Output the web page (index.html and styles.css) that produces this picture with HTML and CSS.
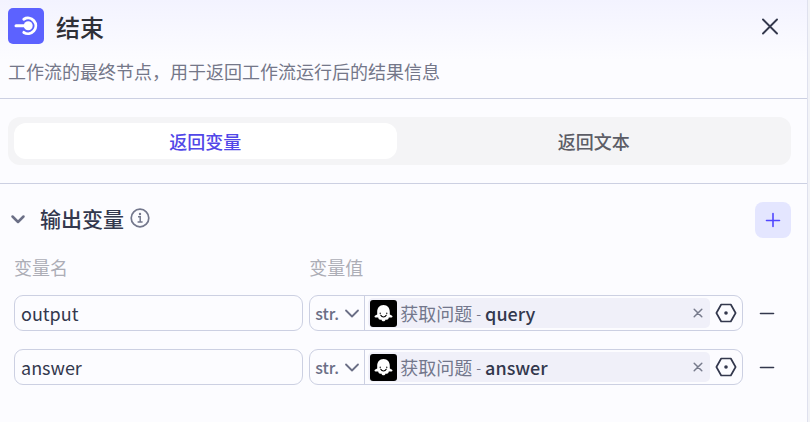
FILE: index.html
```html
<!DOCTYPE html>
<html lang="zh-CN">
<head>
    <meta charset="UTF-8">
    <meta name="viewport" content="width=device-width, initial-scale=1.0">
    <title>结束</title>
    <link rel="stylesheet" href="styles.css">
</head>
<body>

<!-- Iconos compartidos -->
<svg class="sprite" aria-hidden="true">
    <symbol id="icon-chevron" viewBox="0 0 16 16">
        <path d="M2 5.500l6 6 6-6" fill="none" stroke="currentColor" stroke-width="1.800" stroke-linecap="round" stroke-linejoin="round"/>
    </symbol>
    <symbol id="icon-avatar" viewBox="0 0 27 27">
        <rect width="27" height="27" rx="3" fill="#000"/>
        <path d="M13.5 5C9.400 5 7.200 8 7.200 12v2.500c-1.300.7-2.900 1.300-2.700 2.200.3.900 2.500.8 3.700.8.300 1.800 1.500 2.700 3 2 .6 1.300 1.500 1.800 2.300 1.800s1.700-.5 2.300-1.800c1.500.7 2.700-.2 3-2 1.200 0 3.400.1 3.700-.8.200-.9-1.400-1.500-2.700-2.200V12c0-4-2.200-7-6.300-7z" fill="#fff"/>
        <path d="M10.800 15.200c1.200 2.400 4.200 2.400 5.400 0M10.200 13v.6M16.800 13v.6" fill="none" stroke="#000" stroke-width="1.100" stroke-linecap="round"/>
    </symbol>
    <symbol id="icon-clear" viewBox="0 0 10 10">
        <path d="M1.200 1.200l7.600 7.600M8.800 1.200L1.200 8.800" fill="none" stroke="currentColor" stroke-width="1.500" stroke-linecap="round"/>
    </symbol>
    <symbol id="icon-hexagon" viewBox="0 0 22 20">
        <path d="M6.200 1.500h9.600L20.600 10l-4.800 8.500H6.200L1.400 10z" fill="none" stroke="currentColor" stroke-width="1.700" stroke-linejoin="round"/>
        <circle cx="11" cy="10" r="1.800" fill="currentColor"/>
    </symbol>
    <symbol id="icon-minus" viewBox="0 0 16 16">
        <path d="M1.500 8.500h13" stroke="currentColor" stroke-width="1.600" stroke-linecap="round"/>
    </symbol>
</svg>

<main class="panel">
    <header class="header">
        <div class="title-row">
            <svg class="logo" viewBox="0 0 36 36" aria-hidden="true">
                <rect width="36" height="36" rx="5" fill="#5c62ff"/>
                <path d="M8 17.800H20" stroke="#fff" stroke-width="3" stroke-linecap="round"/>
                <circle cx="20.200" cy="17.800" r="4.500" fill="#fff"/>
                <path d="M15.800 11.200A7.800 7.800 0 1 1 15.800 24.400" fill="none" stroke="#fff" stroke-width="2.900" stroke-linecap="round"/>
            </svg>
            <h1>结束</h1>
            <button class="icon-button close" type="button" aria-label="关闭">
                <svg width="18" height="18" viewBox="0 0 18 18"><path d="M2 2.500l14 14M16 2.500l-14 14" stroke="currentColor" stroke-width="1.900" stroke-linecap="round"/></svg>
            </button>
        </div>
        <p class="description">工作流的最终节点，用于返回工作流运行后的结果信息</p>
    </header>

    <section class="mode">
        <div class="tabs" role="tablist">
            <button class="tab active" type="button" role="tab" aria-selected="true">返回变量</button>
            <button class="tab" type="button" role="tab" aria-selected="false">返回文本</button>
        </div>
    </section>

    <section class="outputs">
        <div class="section-head">
            <button class="icon-button toggle" type="button" aria-label="收起">
                <svg width="16" height="16" viewBox="0 0 16 16"><path d="M2.500 5.500L8 11l5.500-5.500" fill="none" stroke="currentColor" stroke-width="2.500" stroke-linecap="round" stroke-linejoin="round"/></svg>
            </button>
            <h2>输出变量</h2>
            <svg class="info" viewBox="0 0 20 20" aria-hidden="true">
                <circle cx="10" cy="10" r="8.800" fill="none" stroke="currentColor" stroke-width="1.700"/>
                <circle cx="10" cy="6" r="1.200" fill="currentColor"/>
                <path d="M8 8.800h2.200v5M7.600 14h5" fill="none" stroke="currentColor" stroke-width="1.500"/>
            </svg>
            <button class="add" type="button" aria-label="添加">
                <svg width="16" height="16" viewBox="0 0 16 16"><path d="M8 1.500v13M1.500 8.500h13" stroke="currentColor" stroke-width="1.600" stroke-linecap="round"/></svg>
            </button>
        </div>

        <div class="row labels">
            <span id="label-name">变量名</span>
            <span id="label-value">变量值</span>
        </div>

        <div class="row">
            <input class="name" type="text" value="output" aria-labelledby="label-name">
            <div class="value">
                <div class="type">
                    <select aria-label="类型"><option>str.</option></select>
                    <svg class="type-arrow" aria-hidden="true"><use href="#icon-chevron"/></svg>
                </div>
                <div class="token">
                    <svg class="avatar" aria-hidden="true"><use href="#icon-avatar"/></svg>
                    <span class="source">获取问题</span>
                    <span class="dash">-</span>
                    <span class="field">query</span>
                    <button class="icon-button clear" type="button" aria-label="清除"><svg width="10" height="10"><use href="#icon-clear"/></svg></button>
                </div>
                <button class="icon-button picker" type="button" aria-label="选择变量"><svg width="22" height="20"><use href="#icon-hexagon"/></svg></button>
            </div>
            <button class="icon-button remove" type="button" aria-label="删除"><svg width="16" height="16"><use href="#icon-minus"/></svg></button>
        </div>

        <div class="row">
            <input class="name" type="text" value="answer" aria-labelledby="label-name">
            <div class="value">
                <div class="type">
                    <select aria-label="类型"><option>str.</option></select>
                    <svg class="type-arrow" aria-hidden="true"><use href="#icon-chevron"/></svg>
                </div>
                <div class="token">
                    <svg class="avatar" aria-hidden="true"><use href="#icon-avatar"/></svg>
                    <span class="source">获取问题</span>
                    <span class="dash">-</span>
                    <span class="field">answer</span>
                    <button class="icon-button clear" type="button" aria-label="清除"><svg width="10" height="10"><use href="#icon-clear"/></svg></button>
                </div>
                <button class="icon-button picker" type="button" aria-label="选择变量"><svg width="22" height="20"><use href="#icon-hexagon"/></svg></button>
            </div>
            <button class="icon-button remove" type="button" aria-label="删除"><svg width="16" height="16"><use href="#icon-minus"/></svg></button>
        </div>
    </section>
</main>

</body>
</html>
```
FILE: styles.css
```css
* {
    box-sizing: border-box;
}
body {
    margin: 0;
    padding-right: 2px;
    background-color: #f2f3f7;
    color: #33384d;
    font-family: "Noto Sans CJK SC", sans-serif;
    font-size: 18px;
}
button, input, select {
    font-family: inherit;
    font-size: inherit;
    color: inherit;
    margin: 0;
}
button {
    padding: 0;
    border: none;
    background: none;
    cursor: pointer;
}
h1, h2, p {
    margin: 0;
    font-weight: 500;
}
svg {
    display: block;
    flex-shrink: 0;
}
.sprite {
    position: absolute;
    width: 0;
    height: 0;
}
.panel {
    min-height: 100vh;
    border-right: 1px solid #dfe1ee;
    background: linear-gradient(#f3f3ff, #fcfcff 60px);
}
.icon-button {
    display: flex;
    align-items: center;
    justify-content: center;
    flex-shrink: 0;
}

/* Cabecera */
.header {
    padding: 8px 16px 12px 8px;
    border-bottom: 1px solid #ccd0e2;
}
.title-row {
    display: flex;
    align-items: center;
    gap: 12px;
}
.logo {
    width: 36px;
    height: 36px;
}
h1 {
    padding-top: 2px;
    font-size: 24px;
    line-height: 34px;
    color: #2f3037;
}
.close {
    width: 42px;
    height: 36px;
    margin-left: auto;
}
.description {
    padding-top: 14px;
    padding-bottom: 2px;
    font-weight: 400;
    line-height: 26px;
    color: #747789;
}

/* Pestañas */
.mode {
    padding: 18px 16px 18px 8px;
    border-bottom: 1px solid #ccd0e2;
}
.tabs {
    display: flex;
    gap: 6px;
    padding: 6px;
    border-radius: 12px;
    background-color: #f4f4f6;
}
.tab {
    flex: 1;
    height: 36px;
    border-radius: 12px;
    font-weight: 500;
    color: #5c5d66;
}
.tab.active {
    background-color: #fff;
    color: #5147e8;
}

/* Variables */
.outputs {
    padding: 18px 16px 36px 8px;
}
.section-head {
    display: flex;
    align-items: flex-start;
    height: 36px;
}
.toggle {
    width: 20px;
    height: 34px;
    color: #6b6f86;
}
h2 {
    margin-left: 12px;
    font-size: 21px;
    line-height: 32px;
}
.info {
    width: 20px;
    height: 32px;
    margin-left: 6px;
    color: #73778c;
}
.add {
    display: flex;
    align-items: center;
    justify-content: center;
    width: 36px;
    height: 36px;
    margin-left: auto;
    border-radius: 8px;
    background-color: #e4e6ff;
    color: #5147ff;
}
.row {
    display: grid;
    grid-template-columns: 2fr 3fr 36px;
    gap: 6px;
    margin-bottom: 18px;
    padding: 0 6px;
}
.labels {
    margin: 18px 0 16px;
    line-height: 23px;
    color: #acadb6;
}
.name {
    min-width: 0;
    height: 36px;
    padding: 0 6px;
    border: 1px solid #ccd0e2;
    border-radius: 9px;
    background: none;
}
.value {
    display: flex;
    align-items: center;
    min-width: 0;
    height: 36px;
    border: 1px solid #ccd0e2;
    border-radius: 9px;
}
.type {
    display: grid;
    align-items: center;
    width: 55px;
    height: 100%;
    border-right: 1px solid #ccd0e2;
    color: #6b6f86;
}
.type select {
    grid-area: 1 / 1;
    width: 100%;
    height: 100%;
    padding: 0 0 0 5px;
    border: none;
    background: none;
    font-size: 16px;
    font-weight: 500;
    appearance: none;
}
.type-arrow {
    grid-area: 1 / 1;
    justify-self: end;
    width: 16px;
    height: 16px;
    margin-right: 4px;
    pointer-events: none;
}
.token {
    display: flex;
    align-items: center;
    flex: 1;
    min-width: 0;
    height: 30px;
    margin-left: 3px;
    padding: 0 2px;
    border-radius: 5px;
    background-color: #f0f0f9;
}
.avatar {
    width: 27px;
    height: 27px;
}
.source {
    margin-left: 3px;
    color: #73778c;
}
.dash {
    margin: 0 4px;
    font-size: 14px;
    color: #73778c;
}
.field {
    font-weight: 500;
}
.clear {
    width: 20px;
    height: 20px;
    margin-left: auto;
    color: #777b8c;
}
.picker {
    width: 32px;
    height: 30px;
}
.remove {
    width: 36px;
    height: 36px;
}
```
